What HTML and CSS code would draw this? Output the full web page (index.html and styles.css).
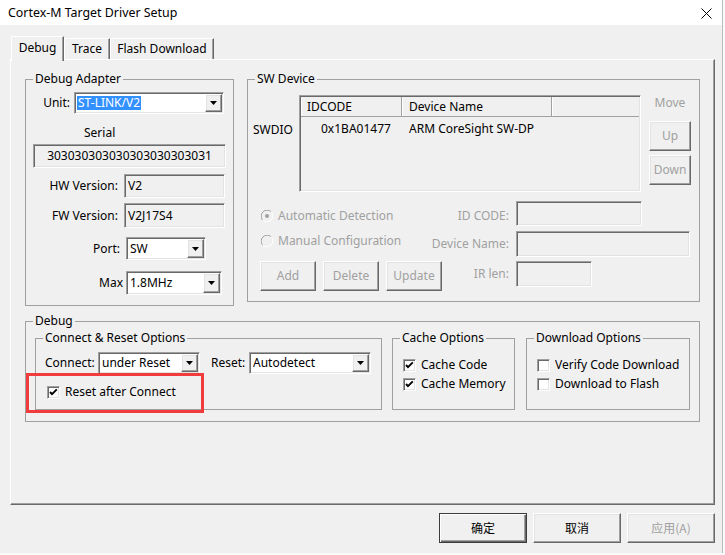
FILE: index.html
```html
<!DOCTYPE html>
<html>
<head>
<meta charset="utf-8">
<title>Cortex-M Target Driver Setup</title>
<link rel="stylesheet" href="styles.css">
</head>
<body>
<div class="window">
  <div class="titlebar">
    <span class="title">Cortex-M Target Driver Setup</span>
    <svg class="close" width="11" height="11" viewBox="0 0 11 11"><path d="M0.5 0.5L10.5 10.5M10.5 0.5L0.5 10.5" stroke="#000" stroke-width="1" fill="none"/></svg>
  </div>
  <div class="client">
    <div class="tabs">
      <div class="tab tab-active tab-debug">Debug</div>
      <div class="tab tab-trace">Trace</div>
      <div class="tab tab-flash">Flash Download</div>
    </div>
    <div class="panel">
      <div class="row-top">
        <fieldset class="group g-adapter">
          <legend>Debug Adapter</legend>
          <div class="frow frow-unit">
            <span class="lbl lbl-unit">Unit:</span>
            <div class="combo sunken combo-unit">
              <span class="combo-text"><span class="sel">ST-LINK/V2</span></span>
              <span class="combo-btn raised"><svg width="7" height="4" viewBox="0 0 7 4"><path d="M0 0H7L3.5 4Z" fill="#000"/></svg></span>
            </div>
          </div>
          <div class="serial-lbl">Serial</div>
          <div class="field sunken field-serial">303030303030303030303031</div>
          <div class="frow frow-hw">
            <span class="lbl lbl-ver">HW Version:</span>
            <div class="field sunken field-ver">V2</div>
          </div>
          <div class="frow frow-fw">
            <span class="lbl lbl-ver">FW Version:</span>
            <div class="field sunken field-ver field-fw">V2J17S4</div>
          </div>
          <div class="frow frow-port">
            <span class="lbl lbl-port">Port:</span>
            <div class="combo sunken combo-port">
              <span class="combo-text">SW</span>
              <span class="combo-btn raised"><svg width="7" height="4" viewBox="0 0 7 4"><path d="M0 0H7L3.5 4Z" fill="#000"/></svg></span>
            </div>
          </div>
          <div class="frow frow-max">
            <span class="lbl lbl-max">Max</span>
            <div class="combo sunken combo-max">
              <span class="combo-text">1.8MHz</span>
              <span class="combo-btn raised"><svg width="7" height="4" viewBox="0 0 7 4"><path d="M0 0H7L3.5 4Z" fill="#000"/></svg></span>
            </div>
          </div>
        </fieldset>

        <fieldset class="group g-swd">
          <legend>SW Device</legend>
          <div class="swd-top">
            <div class="swdio">SWDIO</div>
            <div class="listbox sunken">
              <div class="lhead">
                <div class="hcell hc1">IDCODE</div>
                <div class="hcell hc2">Device Name</div>
                <div class="hcell hc3"></div>
              </div>
              <div class="lrow">
                <div class="lc1">0x1BA01477</div>
                <div class="lc2">ARM CoreSight SW-DP</div>
              </div>
            </div>
            <div class="movecol">
              <div class="move-lbl dis">Move</div>
              <div class="btn raised dis btn-up">Up</div>
              <div class="btn raised dis btn-down">Down</div>
            </div>
          </div>
          <div class="srow srow-a">
            <div class="radio dis">
              <svg width="12" height="12" viewBox="0 0 12 12"><path d="M1.76 10.24A6 6 0 0 1 10.24 1.76" stroke="#a0a0a0" stroke-width="1" fill="none"/><path d="M10.24 1.76A6 6 0 0 1 1.76 10.24" stroke="#ffffff" stroke-width="1" fill="none"/><circle cx="6" cy="6" r="2" fill="#a0a0a0"/></svg>
              <span>Automatic Detection</span>
            </div>
            <span class="slbl dis slbl-id">ID CODE:</span>
            <div class="slot"><div class="field sunken f-idcode"></div></div>
          </div>
          <div class="srow srow-b">
            <div class="radio dis">
              <svg width="12" height="12" viewBox="0 0 12 12"><path d="M1.76 10.24A6 6 0 0 1 10.24 1.76" stroke="#a0a0a0" stroke-width="1" fill="none"/><path d="M10.24 1.76A6 6 0 0 1 1.76 10.24" stroke="#ffffff" stroke-width="1" fill="none"/></svg>
              <span>Manual Configuration</span>
            </div>
            <span class="slbl dis">Device Name:</span>
            <div class="slot"><div class="field sunken f-devname"></div></div>
          </div>
          <div class="srow srow-c">
            <div class="sbtns">
              <div class="btn raised dis btn-s">Add</div>
              <div class="btn raised dis btn-s">Delete</div>
              <div class="btn raised dis btn-s">Update</div>
            </div>
            <span class="slbl dis slbl-ir">IR len:</span>
            <div class="slot"><div class="field sunken f-irlen"></div></div>
          </div>
        </fieldset>
      </div>

      <fieldset class="group g-debug">
        <legend>Debug</legend>
        <div class="debug-row">
          <fieldset class="group g-cro">
            <legend>Connect &amp; Reset Options</legend>
            <div class="cro-row">
              <span class="lbl-connect">Connect:</span>
              <div class="combo sunken combo-connect">
                <span class="combo-text">under Reset</span>
                <span class="combo-btn raised"><svg width="7" height="4" viewBox="0 0 7 4"><path d="M0 0H7L3.5 4Z" fill="#000"/></svg></span>
              </div>
              <span class="lbl-reset">Reset:</span>
              <div class="combo sunken combo-reset">
                <span class="combo-text">Autodetect</span>
                <span class="combo-btn raised"><svg width="7" height="4" viewBox="0 0 7 4"><path d="M0 0H7L3.5 4Z" fill="#000"/></svg></span>
              </div>
            </div>
            <div class="chk chk-cro">
              <span class="cbox sunken"><svg width="9" height="9" viewBox="0 0 9 9"><path d="M1 4L3 6.2L7.8 1.4" stroke="#000" stroke-width="1.9" fill="none"/></svg></span>
              <span>Reset after Connect</span>
            </div>
          </fieldset>
          <fieldset class="group g-cache">
            <legend>Cache Options</legend>
            <div class="chk chk-first">
              <span class="cbox sunken"><svg width="9" height="9" viewBox="0 0 9 9"><path d="M1 4L3 6.2L7.8 1.4" stroke="#000" stroke-width="1.9" fill="none"/></svg></span>
              <span>Cache Code</span>
            </div>
            <div class="chk chk-second">
              <span class="cbox sunken"><svg width="9" height="9" viewBox="0 0 9 9"><path d="M1 4L3 6.2L7.8 1.4" stroke="#000" stroke-width="1.9" fill="none"/></svg></span>
              <span>Cache Memory</span>
            </div>
          </fieldset>
          <fieldset class="group g-dl">
            <legend>Download Options</legend>
            <div class="chk chk-first">
              <span class="cbox sunken"></span>
              <span class="clip">Verify Code Download</span>
            </div>
            <div class="chk chk-second">
              <span class="cbox sunken"></span>
              <span>Download to Flash</span>
            </div>
          </fieldset>
        </div>
      </fieldset>
    </div>
    <div class="dlg-buttons">
      <div class="btn raised btn-main btn-default">确定</div>
      <div class="btn raised btn-main">取消</div>
      <div class="btn raised btn-main dis">应用(A)</div>
    </div>
  </div>
  <div class="annot"></div>
</div>
</body>
</html>
```

FILE: styles.css
```css
* { box-sizing: border-box; }
html, body { margin: 0; padding: 0; }
body {
  background: #fafafa;
  font-family: "Noto Sans", "Noto Sans CJK SC", sans-serif;
  font-size: 12px;
  line-height: 16px;
  color: #000;
}
.window {
  position: relative;
  width: 722px;
  height: 553px;
  background: #f0f0f0;
  box-shadow: 1px 0 0 #bdbdbd, 0 1px 0 #d8d8d8;
}
.titlebar {
  height: 25px;
  background: #fff;
  display: flex;
  align-items: center;
  padding: 1px 10px 0 8px;
}
.title { flex: 1; font-size: 12.4px; }
.close { display: block; }

.client { padding: 11px 7px 0 10px; }

/* tabs */
.tabs { display: flex; align-items: flex-end; height: 23px; }
.tab {
  height: 21px;
  display: flex;
  align-items: center;
  justify-content: center;
  background: #f0f0f0;
  border-top: 1px solid #fff;
  border-left: 1px solid #fff;
  border-right: 1px solid #696969;
  box-shadow: inset -1px 0 0 #a0a0a0;
}
.tab-active {
  position: relative;
  z-index: 1;
  height: 25px;
  margin-bottom: -2px;
  padding-bottom: 3px;
}
.tab-debug { margin-left: 1px; width: 53px; }
.tab-trace { width: 46px; }
.tab-flash { width: 104px; }

.panel {
  height: 446px;
  border-top: 1px solid #fff;
  border-left: 1px solid #fff;
  border-right: 1px solid #696969;
  border-bottom: 1px solid #696969;
  box-shadow: inset -1px -1px 0 #a0a0a0;
  padding: 11px 0 0 14px;
}

/* 3D edges */
.sunken {
  border: 1px solid;
  border-color: #a0a0a0 #fff #fff #a0a0a0;
  box-shadow: inset 1px 1px 0 #696969, inset -1px -1px 0 #e3e3e3;
}
.raised {
  border: 1px solid;
  border-color: #fff #696969 #696969 #fff;
  box-shadow: inset -1px -1px 0 #a0a0a0, inset 1px 1px 0 #e3e3e3;
  background: #f0f0f0;
}
.dis { color: #a0a0a0; }

/* group boxes */
.group {
  margin: 0;
  padding: 0;
  border: 1px solid #a0a0a0;
  min-width: 0;
}
.group > legend {
  margin-left: 7px;
  padding: 0 2px;
  line-height: 16px;
}

.row-top { display: flex; align-items: flex-start; gap: 13px; }

/* Debug adapter */
.g-adapter { width: 209px; padding-bottom: 10px; }
.frow { display: flex; align-items: center; }
.lbl { text-align: right; white-space: nowrap; }
.frow-unit { margin-top: 5px; height: 22px; }
.lbl-unit { width: 44px; margin-right: 4px; }
.combo-unit { width: 150px; height: 22px; }
.serial-lbl { margin-top: 11px; margin-left: 58px; }
.field {
  display: flex;
  align-items: center;
  padding-left: 3px;
  white-space: nowrap;
  background: #f0f0f0;
}
.field-serial {
  margin-top: 3px;
  margin-left: 7px;
  width: 193px;
  height: 24px;
  justify-content: center;
  padding-left: 0;
}
.frow-hw { margin-top: 6px; }
.frow-fw { margin-top: 5px; }
.lbl-ver { width: 92px; margin-right: 6px; }
.field-ver { width: 101px; height: 24px; }
.field-fw { height: 25px; }
.frow-port { margin-top: 9px; }
.lbl-port { width: 94px; margin-right: 6px; }
.combo-port { width: 80px; height: 23px; }
.frow-max { margin-top: 11px; }
.lbl-max { width: 97px; margin-right: 3px; }
.combo-max { width: 96px; height: 24px; }

/* combo box */
.combo {
  display: flex;
  padding: 1px;
  background: #fff;
}
.combo-text {
  flex: 1;
  display: flex;
  align-items: center;
  padding-left: 2px;
  white-space: nowrap;
  overflow: hidden;
}
.sel {
  background: #3390ff;
  color: #fff;
  line-height: 14px;
  padding: 0 1px;
  margin-left: -1px;
}
.combo-btn {
  width: 17px;
  display: flex;
  align-items: center;
  justify-content: center;
}
.combo-btn svg { display: block; }

/* SW device */
.g-swd { width: 453px; padding-bottom: 10px; }
.swd-top { display: flex; align-items: flex-start; margin-top: 8px; }
.swdio { width: 46px; margin-left: 5px; padding-top: 27px; }
.listbox {
  width: 342px;
  height: 97px;
  padding: 1px;
  background: #f0f0f0;
}
.lhead { display: flex; height: 20px; }
.hcell {
  height: 20px;
  line-height: 19px;
  padding-left: 6px;
  border-right: 1px solid #a0a0a0;
  border-bottom: 1px solid #a0a0a0;
  box-shadow: inset 1px 0 0 #fff;
  white-space: nowrap;
}
.hc1 { width: 101px; }
.hc2 { width: 150px; padding-left: 7px; }
.hc3 { flex: 1; border-right: 0; }
.lrow { display: flex; margin-top: 4px; }
.lc1 { width: 101px; padding-left: 20px; }
.lc2 { padding-left: 7px; }
.movecol { width: 42px; margin-left: 8px; }
.move-lbl { text-align: center; }
.btn {
  display: flex;
  align-items: center;
  justify-content: center;
  white-space: nowrap;
}
.btn-up { margin-top: 10px; height: 30px; }
.btn-down { margin-top: 4px; height: 30px; }

.srow { display: flex; align-items: center; margin: 0 9px 0 12px; }
.srow-a { margin-top: 9px; }
.srow-b { margin-top: 5px; }
.srow-c { margin-top: 4px; align-items: flex-start; }
.radio { display: flex; align-items: center; gap: 5px; padding-left: 1px; white-space: nowrap; }
.radio svg { display: block; }
.srow-a .radio { margin-top: 4px; }
.srow-b .radio { margin-bottom: 6px; }
.slbl { margin-left: auto; margin-right: 7px; white-space: nowrap; }
.slbl-id { margin-top: 4px; }
.slbl-ir { line-height: 26px; }
.slot { width: 174px; }
.f-idcode { width: 126px; height: 25px; }
.f-devname { width: 174px; height: 26px; }
.f-irlen { width: 76px; height: 26px; }
.sbtns { display: flex; gap: 7px; }
.btn-s { width: 56px; height: 30px; }

/* Debug group */
.g-debug { width: 675px; margin-top: 7px; padding-bottom: 11px; }
.debug-row { display: flex; margin-top: 1px; margin-left: 9px; }
.g-cro { width: 347px; padding-bottom: 9px; }
.g-cache { width: 123px; margin-left: 10px; }
.g-dl { width: 164px; margin-left: 11px; }
.cro-row { display: flex; align-items: center; margin-top: 6px; margin-left: 9px; }
.lbl-connect { width: 53px; white-space: nowrap; }
.combo-connect { width: 102px; height: 22px; }
.lbl-reset { width: 38px; margin-left: 11px; white-space: nowrap; }
.combo-reset { width: 122px; height: 22px; }

.chk { display: flex; align-items: center; gap: 5px; white-space: nowrap; }
.chk-cro { margin-top: 10px; margin-left: 11px; }
.g-cache .chk, .g-dl .chk { margin-left: 10px; }
.chk-first { margin-top: 11px; }
.chk-second { margin-top: 3px; }
.cbox {
  width: 13px;
  height: 13px;
  flex: none;
  background: #fff;
  padding: 1px;
  display: flex;
  align-items: center;
  justify-content: center;
}
.cbox svg { display: block; }
.clip { width: 129px; overflow: hidden; }

/* dialog buttons */
.dlg-buttons {
  display: flex;
  justify-content: flex-end;
  gap: 6px;
  margin-top: 8px;
  font-family: "Noto Sans CJK SC", "Noto Sans", sans-serif;
}
.btn-main { width: 88px; height: 30px; }
.btn-default {
  border: 1px solid #3c3c3c;
  box-shadow: inset 1px 1px 0 #fff, inset -1px -1px 0 #696969, inset -2px -2px 0 #a0a0a0;
}

/* annotation */
.annot {
  position: absolute;
  left: 26px;
  top: 373px;
  width: 178px;
  height: 40px;
  border: 3px solid #f03c3c;
}
```
